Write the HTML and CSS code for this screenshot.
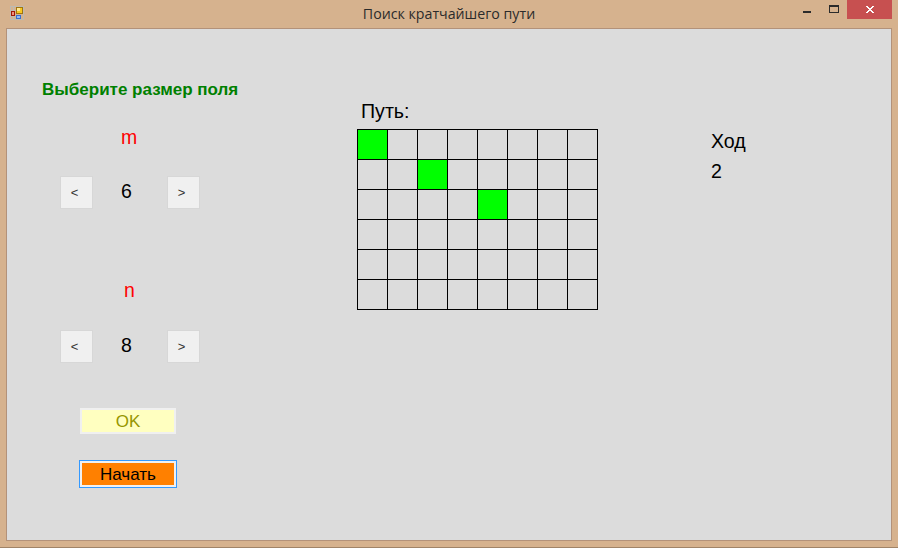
FILE: index.html
```html
<!DOCTYPE html>
<html lang="ru">
<head>
<meta charset="utf-8">
<title>Поиск кратчайшего пути</title>
<link rel="stylesheet" href="styles.css">
</head>
<body>
<div class="window">
  <header class="titlebar">
    <svg class="app-icon" width="14" height="14" viewBox="0 0 14 14" shape-rendering="crispEdges">
      <path d="M0.5 0.5h13v13h-13zM3.5 0v14M0 4.5h6M0 10.5h6" fill="none" stroke="#bdbab2"/>
      <path d="M6 1h7v7H6z" fill="#a07410"/><path d="M7 2h5v5H7z" fill="#f8c820"/><path d="M7 2h3v3H7z" fill="#ffe890"/>
      <path d="M1 5h4v5H1z" fill="#a01808"/><path d="M2 6h2v3H2z" fill="#f09080"/>
      <path d="M6 9h5v4H6z" fill="#3870d0"/><path d="M7 10h3v2H7z" fill="#90b8f8"/>
    </svg>
    <h1 class="caption">Поиск кратчайшего пути</h1>
    <div class="controls">
      <span class="minimize"></span>
      <span class="maximize"></span>
      <span class="close"><svg width="8" height="7" viewBox="0 0 8 7" shape-rendering="crispEdges"><path fill="#fff" d="M0 0h2v1h1v1h2V1h1V0h2v1H7v1H6v1H5v1h1v1h1v1h1v1H6V6H5V5H3v1H2v1H0V6h1V5h1V4h1V3H2V2H1V1H0z"/></svg></span>
    </div>
  </header>
  <main class="client">
    <section class="settings">
      <h2 class="heading">Выберите размер поля</h2>
      <div class="dimension">
        <div class="dim-name">m</div>
        <div class="stepper"><button class="step">&lt;</button><span class="value">6</span><button class="step">&gt;</button></div>
      </div>
      <div class="dimension">
        <div class="dim-name dim-n">n</div>
        <div class="stepper"><button class="step">&lt;</button><span class="value">8</span><button class="step">&gt;</button></div>
      </div>
      <button class="action ok">OK</button>
      <button class="action start">Начать</button>
    </section>
    <section class="path">
      <div class="label path-label">Путь:</div>
      <table class="board">
        <tr><td class="visited"></td><td></td><td></td><td></td><td></td><td></td><td></td><td></td></tr>
        <tr><td></td><td></td><td class="visited"></td><td></td><td></td><td></td><td></td><td></td></tr>
        <tr><td></td><td></td><td></td><td></td><td class="visited"></td><td></td><td></td><td></td></tr>
        <tr><td></td><td></td><td></td><td></td><td></td><td></td><td></td><td></td></tr>
        <tr><td></td><td></td><td></td><td></td><td></td><td></td><td></td><td></td></tr>
        <tr><td></td><td></td><td></td><td></td><td></td><td></td><td></td><td></td></tr>
      </table>
    </section>
    <section class="moves">
      <div class="label move-label">Ход</div>
      <div class="label">2</div>
    </section>
  </main>
</div>
</body>
</html>
```
FILE: styles.css
```css
* { box-sizing: border-box; }
body { margin: 0; font-family: "Liberation Sans", Arial, sans-serif; color: #000; }
button { font-family: inherit; padding: 0; }
.window {
  width: 898px; height: 548px; padding: 0 6px 6px;
  background: #d6b28e; border-bottom: 1px solid #a08468;
  display: flex; flex-direction: column;
}
.titlebar { height: 28px; display: grid; grid-template-columns: 95px 1fr 95px; }
.app-icon { margin: 6px 0 0 4px; }
.caption {
  margin: 0; padding-top: 4px; text-align: center;
  font: 400 14.2px/20px "Open Sans", "Noto Sans", sans-serif; color: #2b2b2b;
  white-space: nowrap;
}
.controls { display: flex; align-items: flex-start; justify-content: flex-end; }
.minimize { width: 8px; height: 2px; margin: 11px 18px 0 0; background: #2b2b2b; }
.maximize { width: 10px; height: 8px; margin: 5px 8px 0 0; border: 1px solid #2b2b2b; border-top-width: 2px; }
.close { width: 45px; height: 19px; background: #c75050; padding: 6px 0 0 19px; }
.close svg { display: block; }
.client {
  flex: none; height: 513px; border: 1px solid #b3927a; background: #dcdcdc;
  display: grid; grid-template-columns: 350px 354px 1fr;
}
.settings { padding-top: 51px; }
.heading { margin: 0 0 26px 35px; font-size: 17px; line-height: 20px; color: #008000; white-space: nowrap; }
.dimension { height: 154px; font-size: 19.5px; line-height: 22px; }
.dim-name { height: 22px; margin-left: 114px; color: #f00; }
.dim-n { margin-left: 117px; line-height: 20px; }
.stepper { display: flex; align-items: center; margin: 28px 0 0 53px; }
.step {
  width: 33px; height: 33px; border: 1px solid #d7d7d7; background: #f0f0f0;
  font-size: 13px; color: #333; padding-right: 4px;
}
.value { width: 74px; padding: 0 0 3px 28px; }
.action { display: block; font-size: 17px; line-height: 20px; }
.ok { width: 96px; height: 26px; margin: -26px 0 26px 73px; padding-top: 2px; border: 2px solid #f0f0f0; background: #ffffc0; color: #969600; }
.start {
  width: 98px; height: 28px; margin-left: 72px; padding: 2px 0 0;
  border: 1px solid #3399ff; background: #ff8000; box-shadow: inset 0 0 0 2px #f0f0f0;
}
.label { font-size: 19.6px; line-height: 22px; white-space: nowrap; }
.path-label { margin: 71px 0 7px 4px; }
.board { border-collapse: collapse; border: 1px solid #000; }
.board td { width: 30px; height: 30px; padding: 0; border: 1px solid #000; }
.visited { background: #0f0; }
.moves { display: flex; flex-direction: column; gap: 8px; padding-top: 101px; }
```
